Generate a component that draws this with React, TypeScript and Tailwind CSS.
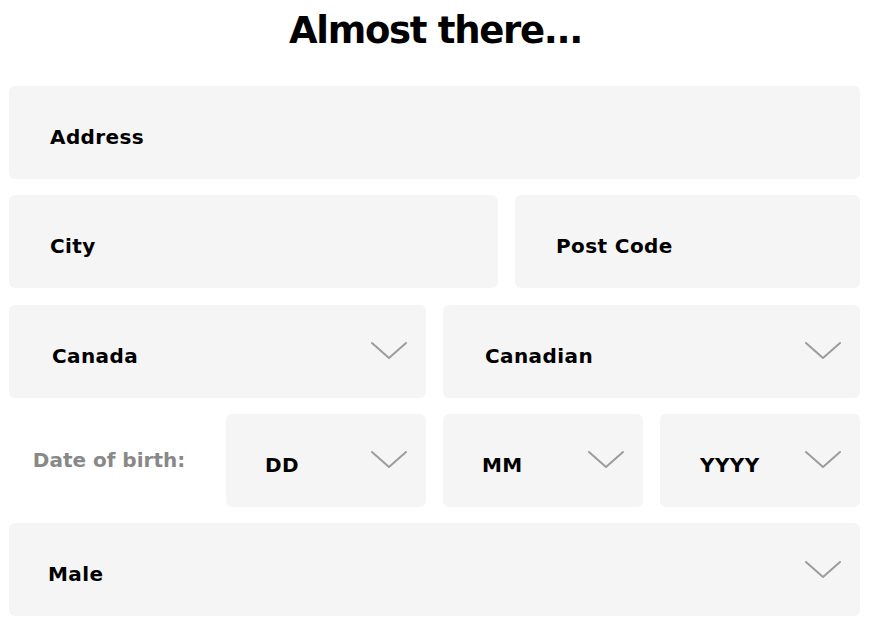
import React from "react";

const Chevron = () => (
  <svg width="38" height="20" viewBox="0 0 38 20" fill="none" className="shrink-0">
    <path d="M2 2 L19 17 L36 2" stroke="#9c9c9c" strokeWidth="2" strokeLinecap="round" strokeLinejoin="round" />
  </svg>
);

const labelCls = "text-[20px] font-bold text-black tracking-[0.4px]";

const Field = ({ label, pl = "pl-[41px]" }: { label: string; pl?: string }) => (
  <div className={`h-[93px] rounded-[6px] bg-[#f5f5f5] flex items-center ${pl} pt-[9px]`}>
    <span className={labelCls}>{label}</span>
  </div>
);

const Select = ({ label, pl = "pl-[41px]" }: { label: string; pl?: string }) => (
  <div className={`h-[93px] rounded-[6px] bg-[#f5f5f5] flex items-center justify-between ${pl} pr-[18px]`}>
    <span className={`${labelCls} pt-[9px]`}>{label}</span>
    <Chevron />
  </div>
);

export default function App() {
  return (
    <div
      className="w-[871px] h-[627px] bg-white"
      style={{ fontFamily: '"DejaVu Sans", "Liberation Sans", sans-serif' }}
    >
      <h1 className="text-center text-[37px] font-bold text-black leading-none pt-[12px] h-[86px] tracking-[-1.3px]">
        Almost there...
      </h1>
      <div className="ml-[9px] w-[851px] flex flex-col gap-[16.25px]">
        <Field label="Address" />
        <div className="grid grid-cols-[489px_1fr] gap-[17px]">
          <Field label="City" />
          <Field label="Post Code" />
        </div>
        <div className="grid grid-cols-2 gap-[17px]">
          <Select label="Canada" pl="pl-[43px]" />
          <Select label="Canadian" pl="pl-[42px]" />
        </div>
        <div className="grid grid-cols-4 gap-[17px]">
          <div className="h-[93px] flex items-center justify-center">
            <span className="text-[20px] font-bold text-[#888888]">Date of birth:</span>
          </div>
          <Select label="DD" pl="pl-[39px]" />
          <Select label="MM" pl="pl-[39px]" />
          <Select label="YYYY" pl="pl-[40px]" />
        </div>
        <Select label="Male" pl="pl-[39px]" />
      </div>
    </div>
  );
}
